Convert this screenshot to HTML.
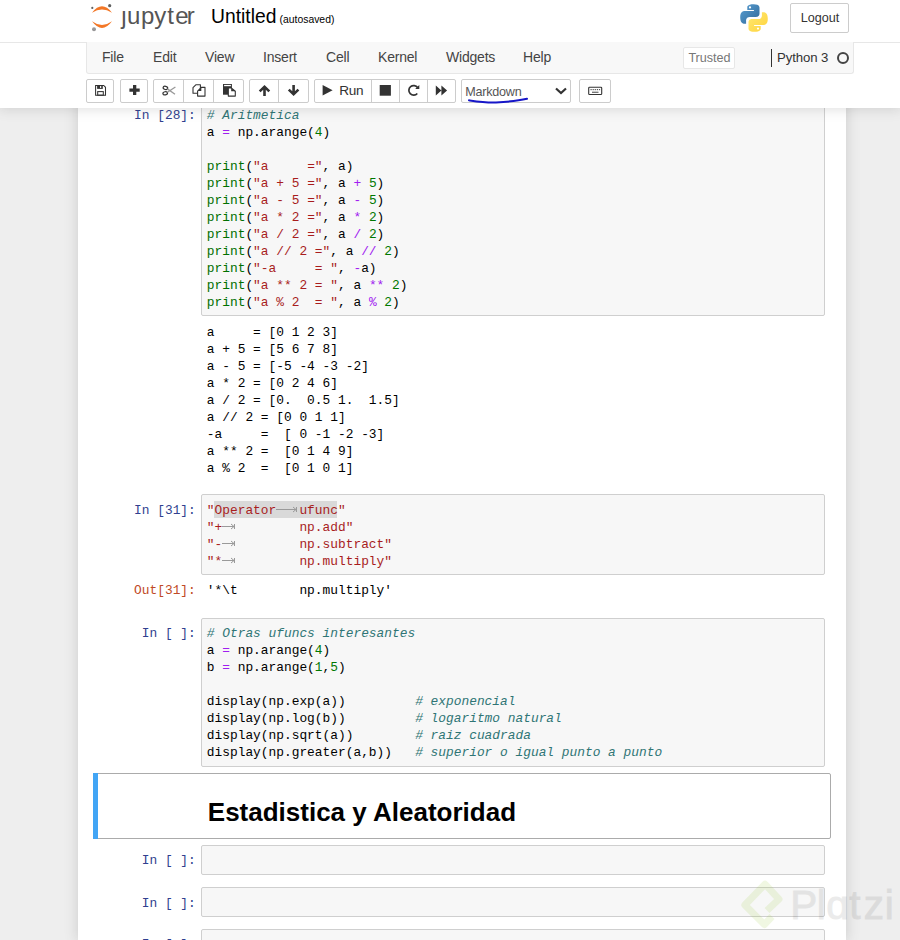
<!DOCTYPE html>
<html><head><meta charset="utf-8">
<style>
*{box-sizing:border-box;margin:0;padding:0}
html,body{width:900px;height:940px;overflow:hidden}
body{background:#eeeeee;position:relative;font-family:"Liberation Sans",sans-serif;font-size:13px;color:#000}
.abs{position:absolute}
#header{position:absolute;left:0;top:0;width:900px;height:108px;background:#fff;box-shadow:0 0 12px 1px rgba(87,87,87,0.2);z-index:5}
#hline{position:absolute;left:0;top:42px;width:900px;height:1px;background:#e7e7e7}
#menubar{position:absolute;left:86px;top:42px;width:768px;height:32px;background:#f8f8f8;border:1px solid #e7e7e7;border-top:none;border-radius:0 0 3px 3px}
.menu{position:absolute;top:47.5px;color:#444;font-size:14px;line-height:18px;letter-spacing:-0.2px}
.btn{position:absolute;top:79px;height:24px;border:1px solid #ccc;border-radius:2px;background:#fff}
.grp{position:absolute;top:79px;height:24px;border:1px solid #ccc;border-radius:2px;background:#fff;display:flex}
.grp>div{height:22px;border-left:1px solid #ccc;position:relative}
.grp>div:first-child{border-left:none}
#nb{position:absolute;left:78px;top:0;width:768px;height:940px;background:#fff;box-shadow:0 0 12px 1px rgba(87,87,87,0.2)}
.prompt{position:absolute;left:100.8px;width:95px;text-align:right;font-family:"Liberation Mono",monospace;font-size:12.86px;line-height:17px;color:#303F8F}
.out{color:#bf4a26}
.inp{position:absolute;left:201px;width:624px;background:#f7f7f7;border:1px solid #cfcfcf;border-radius:2px}
.code{position:absolute;left:206.8px;font-family:"Liberation Mono",monospace;font-size:12.86px;line-height:17px;white-space:pre;color:#000}
.k{color:#006f00}.c{color:#2f7575;font-style:italic}.s{color:#a81d1d}.n{color:#007700}.o{color:#a020f0}
</style></head><body>
<div id="nb"></div>

<!-- cell 1 -->
<div class="inp" style="top:60px;height:256px"></div>
<div class="prompt" style="top:107px">In&nbsp;[28]:</div>
<div class="code" style="top:107px"><span class="c"># Aritmetica</span>
a <span class="o">=</span> np.arange(<span class="n">4</span>)

<span class="k">print</span>(<span class="s">"a     ="</span>, a)
<span class="k">print</span>(<span class="s">"a + 5 ="</span>, a <span class="o">+</span> <span class="n">5</span>)
<span class="k">print</span>(<span class="s">"a - 5 ="</span>, a <span class="o">-</span> <span class="n">5</span>)
<span class="k">print</span>(<span class="s">"a * 2 ="</span>, a <span class="o">*</span> <span class="n">2</span>)
<span class="k">print</span>(<span class="s">"a / 2 ="</span>, a <span class="o">/</span> <span class="n">2</span>)
<span class="k">print</span>(<span class="s">"a // 2 ="</span>, a <span class="o">//</span> <span class="n">2</span>)
<span class="k">print</span>(<span class="s">"-a     = "</span>, <span class="o">-</span>a)
<span class="k">print</span>(<span class="s">"a ** 2 = "</span>, a <span class="o">**</span> <span class="n">2</span>)
<span class="k">print</span>(<span class="s">"a % 2  = "</span>, a <span class="o">%</span> <span class="n">2</span>)</div>
<div class="code" style="top:324px">a     = [0 1 2 3]
a + 5 = [5 6 7 8]
a - 5 = [-5 -4 -3 -2]
a * 2 = [0 2 4 6]
a / 2 = [0.  0.5 1.  1.5]
a // 2 = [0 0 1 1]
-a     =  [ 0 -1 -2 -3]
a ** 2 =  [0 1 4 9]
a % 2  =  [0 1 0 1]</div>

<!-- cell 2 -->
<div class="inp" style="top:494px;height:81px"></div>
<div class="abs" style="left:214px;top:501px;width:123px;height:17px;background:#d9d9d9"></div>
<div class="prompt" style="top:502px">In&nbsp;[31]:</div>
<div class="code" style="top:502px"><span class="s">"Operator   ufunc"</span>
<span class="s">"+          np.add"</span>
<span class="s">"-          np.subtract"</span>
<span class="s">"*          np.multiply"</span></div>
<svg class="abs" style="left:200px;top:500px" width="120" height="70" viewBox="200 500 120 70">
  <g stroke="#9a9a9a" stroke-width="1" fill="none">
    <path d="M276 509.5h20.5 M293 507l3 2.5-3 2.5 M296.5 507v5"/>
    <path d="M222 526.5h12.5 M231 524l3 2.5-3 2.5 M234.5 524v5"/>
    <path d="M222 543.5h12.5 M231 541l3 2.5-3 2.5 M234.5 541v5"/>
    <path d="M222 560.5h12.5 M231 558l3 2.5-3 2.5 M234.5 558v5"/>
  </g>
</svg>
<div class="prompt out" style="top:582px">Out[31]:</div>
<div class="code" style="top:582px">'*\t        np.multiply'</div>

<!-- cell 3 -->
<div class="inp" style="top:618px;height:149px"></div>
<div class="prompt" style="top:625px">In&nbsp;[&nbsp;]:</div>
<div class="code" style="top:625px"><span class="c"># Otras ufuncs interesantes</span>
a <span class="o">=</span> np.arange(<span class="n">4</span>)
b <span class="o">=</span> np.arange(<span class="n">1</span>,<span class="n">5</span>)

display(np.exp(a))         <span class="c"># exponencial</span>
display(np.log(b))         <span class="c"># logaritmo natural</span>
display(np.sqrt(a))        <span class="c"># raiz cuadrada</span>
display(np.greater(a,b))   <span class="c"># superior o igual punto a punto</span></div>

<!-- markdown cell -->
<div class="abs" style="left:93px;top:773px;width:738px;height:66px;border:1px solid #ababab;border-radius:2px;background:#fff"></div><div class="abs" style="left:93px;top:773px;width:5px;height:66px;background:#42A5F5"></div>
<div class="abs" style="left:207.8px;top:797px;font-size:26px;font-weight:bold;line-height:30px;color:#000">Estadistica y Aleatoridad</div>

<!-- empty cells -->
<div class="inp" style="top:845px;height:30px"></div>
<div class="prompt" style="top:852px">In&nbsp;[&nbsp;]:</div>
<div class="inp" style="top:887px;height:30px"></div>
<div class="prompt" style="top:895px">In&nbsp;[&nbsp;]:</div>
<div class="inp" style="top:929px;height:30px"></div>
<div class="prompt" style="top:936px">In&nbsp;[&nbsp;]:</div>

<!-- header -->
<div id="header">
  <div id="hline"></div>
  <div id="menubar"></div>
  <svg class="abs" style="left:88px;top:2px" width="28" height="32" viewBox="0 0 28 32">
    <path d="M4 10.7 Q14 -2.1 24 10.7 Q14 4.3 4 10.7Z" fill="#F37726"/>
    <path d="M4 19.3 Q14 32.7 24 19.3 Q14 26.7 4 19.3Z" fill="#F37726"/>
    <circle cx="21.7" cy="3.7" r="1.6" fill="#616262"/>
    <circle cx="4.3" cy="5.9" r="1.1" fill="#616262"/>
    <circle cx="6" cy="27.3" r="2" fill="#989798"/>
  </svg>
  <div class="abs" style="left:0;top:0.5px;font-size:24px;color:#555;line-height:30px"><span class="abs" style="left:121.3px;top:0">&#567;</span><span class="abs" style="left:127.1px;top:0">u</span><span class="abs" style="left:141px;top:0">p</span><span class="abs" style="left:154.2px;top:0">y</span><span class="abs" style="left:167.3px;top:0">t</span><span class="abs" style="left:175.2px;top:0">e</span><span class="abs" style="left:186.8px;top:0">r</span></div>
  <div class="abs" style="left:211px;top:4.5px;font-size:19.3px;line-height:24px;color:#000">Untitled</div><div class="abs" style="left:279.5px;top:13px;font-size:10.4px;line-height:14px;color:#000">(autosaved)</div>
  <svg class="abs" style="left:740px;top:4px" width="28" height="28" viewBox="0 0 28 28">
    <defs>
      <linearGradient id="pb" x1="0" y1="0" x2="1" y2="1"><stop offset="0" stop-color="#5A9FD4"/><stop offset="1" stop-color="#306998"/></linearGradient>
      <linearGradient id="py" x1="0" y1="0" x2="1" y2="1"><stop offset="0" stop-color="#FFE873"/><stop offset="1" stop-color="#FFD43B"/></linearGradient>
    </defs>
    <path d="M13.7 0.2C7 0.2 7.3 3 7.3 3v3h6.6v1H4.4S0.2 6.6 0.2 13.3s3.7 6.5 3.7 6.5h2.2v-3.2s-0.1-3.700 3.6-3.7h6.300s3.5 0.1 3.5-3.400V3.700S20 0.2 13.7 0.2zM10 2.300a1.100 1.100 0 1 1 0 2.200 1.100 1.100 0 0 1 0-2.200z" fill="url(#pb)"/>
    <path d="M14.300 27.800c6.7 0 6.400-2.900 6.400-2.900v-3h-6.600v-0.900h9.500s4.200 0.500 4.200-6.200-3.700-6.500-3.700-6.500h-2.200v3.100s0.100 3.700-3.600 3.700h-6.300s-3.500-0.100-3.500 3.400v5.700S7.900 27.800 14.300 27.800zm3.700-2.100a1.100 1.100 0 1 1 0-2.200 1.100 1.100 0 0 1 0 2.200z" fill="url(#py)"/>
  </svg>
  <div class="abs" style="left:790px;top:3px;width:59px;height:30px;border:1px solid #ccc;border-radius:2px;font-size:12.6px;line-height:28px;text-align:center;color:#333;padding-left:1px">Logout</div>
  <div class="menu" style="left:102px">File</div>
  <div class="menu" style="left:153px">Edit</div>
  <div class="menu" style="left:205px">View</div>
  <div class="menu" style="left:263px">Insert</div>
  <div class="menu" style="left:326px">Cell</div>
  <div class="menu" style="left:378px">Kernel</div>
  <div class="menu" style="left:446px">Widgets</div>
  <div class="menu" style="left:523px">Help</div>
  <div class="abs" style="left:683px;top:47px;width:52px;height:22px;border:1px solid #e7e7e7;background:#fff;border-radius:2px;color:#777;font-size:12.6px;line-height:20px;text-align:center;padding-left:1px">Trusted</div>
  <div class="abs" style="left:771px;top:49px;width:1px;height:18px;background:#333"></div>
  <div class="menu" style="left:777px;top:49px;font-size:13.2px;letter-spacing:-0.1px;color:#333">Python 3</div>
  <div class="abs" style="left:837px;top:52px;width:12px;height:12px;border:2px solid #444;border-radius:50%"></div>

  <div class="btn" style="left:86px;width:28px"></div>
  <div class="btn" style="left:120px;width:28px"></div>
  <div class="btn" style="left:153px;width:91px"><div class="abs" style="left:29px;top:0;width:1px;height:22px;background:#ccc"></div><div class="abs" style="left:59px;top:0;width:1px;height:22px;background:#ccc"></div></div>
  <div class="btn" style="left:249px;width:60px"><div class="abs" style="left:28px;top:0;width:1px;height:22px;background:#ccc"></div></div>
  <div class="btn" style="left:314px;width:142px"><div class="abs" style="left:56px;top:0;width:1px;height:22px;background:#ccc"></div><div class="abs" style="left:84px;top:0;width:1px;height:22px;background:#ccc"></div><div class="abs" style="left:112px;top:0;width:1px;height:22px;background:#ccc"></div></div>
  <div class="abs" style="left:461px;top:79px;width:110px;height:24px;border:1px solid #ccc;border-radius:2px;background:#fff"></div>
  <div class="abs" style="left:465.3px;top:85.3px;font-size:12.6px;line-height:15px;color:#555;letter-spacing:-0.25px">Markdown</div>
  <svg class="abs" style="left:555px;top:87px" width="12" height="8" viewBox="0 0 12 8"><path d="M1 1.5L6 6 11 1.5" stroke="#333" stroke-width="2.2" fill="none"/></svg>
  <svg class="abs" style="left:466px;top:96px" width="64" height="10" viewBox="0 0 64 10"><path d="M3 4.3C10 5.3 20 6.8 30 6.4C42 5.8 52 4.9 61 2.8" stroke="#1616c8" stroke-width="2" fill="none" stroke-linecap="round"/></svg>
  <div class="btn" style="left:579px;width:32px"></div>
  <!-- icons -->
  <svg class="abs" style="left:0;top:0" width="620" height="108" viewBox="0 0 620 108">
    <g fill="#333">
      <!-- save -->
      <path d="M95.6 85.5h8.1l1.8 1.8v7.9h-9.9z" stroke="#333" stroke-width="1.05" fill="none"/>
      <rect x="97.1" y="85.2" width="5.7" height="3.7"/>
      <rect x="100.1" y="86" width="1.1" height="2" fill="#fff"/>
      <rect x="97.7" y="91.6" width="5.6" height="3.6" stroke="#333" stroke-width="1.05" fill="none"/>
      <!-- plus -->
      <path d="M133 85h3.3v3.4h3.4v3.3h-3.4v3.3h-3.3v-3.3h-3.6v-3.3h3.6z"/>
      <!-- up -->
      <path d="M264.5 85l5.7 5.5-1.8 1.8-2.6-2.5v6.2h-2.6v-6.2l-2.6 2.5-1.8-1.8z"/>
      <!-- down -->
      <path d="M293.6 96l5.7-5.5-1.8-1.8-2.6 2.5V85h-2.6v6.2l-2.6-2.5-1.8 1.8z"/>
      <!-- play -->
      <path d="M322.6 85l10 5.3-10 5.3z"/>
      <!-- stop -->
      <rect x="379.7" y="85" width="11.2" height="10.7"/>
      <!-- forward -->
      <path d="M435.8 85.5l5.6 5-5.6 5z M441.4 85.5l5.7 5-5.7 5z"/>
    </g>
    <!-- restart -->
    <path d="M417.6 87.6 A4.8 4.8 0 1 0 417.3 93.5" stroke="#333" stroke-width="1.7" fill="none"/>
    <path d="M419.3 84.9v4.1h-4.1z" fill="#333"/>
    <!-- cut -->
    <g fill="none">
      <ellipse cx="165.4" cy="87.9" rx="2.3" ry="1.6" stroke="#333" stroke-width="1.2" transform="rotate(12 165.4 87.9)"/>
      <ellipse cx="165.2" cy="93.3" rx="2.3" ry="1.6" stroke="#333" stroke-width="1.2" transform="rotate(-12 165.2 93.3)"/>
      <path d="M167.4 88.9L175 94.3 M167.4 92.3L175.4 87" stroke="#999" stroke-width="1.3"/>
    </g>
    <!-- copy -->
    <g stroke="#333" fill="#fff" stroke-width="1.1" stroke-linejoin="round">
      <path d="M195.8 84.8H200.4V93.3H193V87.6Z"/>
      <path d="M201.3 87.4H205V96.1H197.6V91.1Z"/>
    </g>
    <path d="M201.3 87.4V91.1H197.6Z" fill="#333"/>
    <!-- paste -->
    <rect x="223" y="84" width="8.9" height="10.7" fill="#333"/>
    <rect x="224.1" y="84.9" width="6.8" height="1.3" fill="#fff"/>
    <path d="M228.3 87.9H231.2L235.3 91.2V96.1H228.3Z" fill="#fff" stroke="#333" stroke-width="1.1" stroke-linejoin="round"/>
    <path d="M231.2 87.9V91.2H235.3Z" fill="#333"/>
    <!-- keyboard -->
    <rect x="588.7" y="87.3" width="13" height="7.2" rx="0.8" stroke="#333" stroke-width="1.1" fill="#fff"/>
    <g fill="#555"><rect x="590.5" y="89" width="1.2" height="1.2"/><rect x="592.6" y="89" width="1.2" height="1.2"/><rect x="594.7" y="89" width="1.2" height="1.2"/><rect x="596.8" y="89" width="1.2" height="1.2"/><rect x="598.9" y="89" width="1.2" height="1.2"/><rect x="592" y="91.7" width="6.5" height="1.1"/></g>
  </svg>
  <div class="abs" style="left:339.3px;top:81.5px;font-size:13.6px;line-height:18px;color:#333;letter-spacing:-0.3px">Run</div>
</div>

<!-- watermark -->
<svg class="abs" style="left:730px;top:870px;z-index:10" width="60" height="65" viewBox="730 870 60 65">
  <path d="M772 916.5L764.4 924.5L744.9 905L765 884.2L778.9 899.2L767 910.5" fill="none" stroke="#98CA3F" stroke-opacity="0.15" stroke-width="7" stroke-linejoin="round"/>
</svg>
<div class="abs" style="left:0;top:880.3px;width:900px;height:50px;z-index:10;font-size:40.5px;line-height:50px;color:#000;-webkit-text-stroke:1px #000;opacity:0.075"><span class="abs" style="left:790.3px;top:0">P</span><span class="abs" style="left:816.7px;top:0">l</span><span class="abs" style="left:826.3px;top:0">&#593;</span><span class="abs" style="left:849.3px;top:0">t</span><span class="abs" style="left:863.7px;top:0">z</span><span class="abs" style="left:884.7px;top:0">i</span></div>
</body></html>
